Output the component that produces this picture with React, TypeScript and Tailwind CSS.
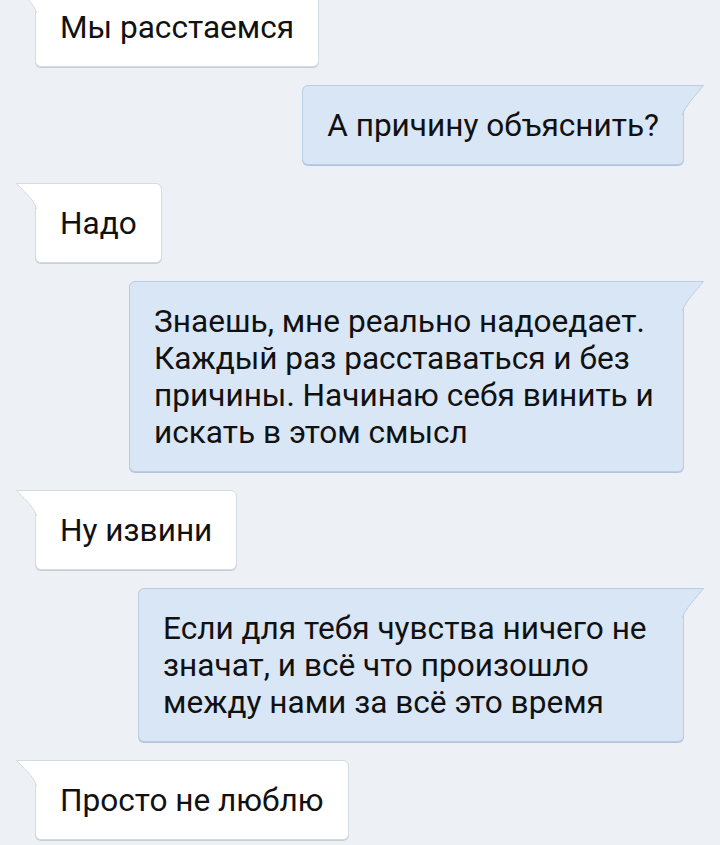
import React from 'react'

type Msg = { out: boolean; lines: string[]; width?: string }

const messages: Msg[] = [
  { out: false, lines: ['Мы расстаемся'] },
  { out: true, lines: ['А причину объяснить?'] },
  { out: false, lines: ['Надо'] },
  {
    out: true,
    width: 'w-[555px]',
    lines: [
      'Знаешь, мне реально надоедает.',
      'Каждый раз расставаться и без',
      'причины. Начинаю себя винить и',
      'искать в этом смысл',
    ],
  },
  { out: false, lines: ['Ну извини'] },
  {
    out: true,
    width: 'w-[546px]',
    lines: [
      'Если для тебя чувства ничего не',
      'значат, и всё что произошло',
      'между нами за всё это время',
    ],
  },
  { out: false, lines: ['Просто не люблю'] },
]

// little corner tail that sticks out at the top of a bubble
function Tail({ out }: { out: boolean }) {
  if (out) {
    return (
      <svg
        className="absolute top-[-1px] right-[-21px] w-[22px] h-[30px]"
        viewBox="0 0 22 30"
      >
        <path d="M0 0.5 H21.5 C15 9 2 22 0 30 V0 Z" fill="#d9e6f6" />
        <path d="M0 0.5 H21.5 C15 9 2 22 0.5 30" fill="none" stroke="#bccde3" strokeWidth="1" />
      </svg>
    )
  }
  return (
    <svg
      className="absolute top-[-1px] left-[-20px] w-[21px] h-[26px]"
      viewBox="0 0 21 26"
    >
      <path d="M21 0.5 H0.5 C6 7 18 16 21 26 V0 Z" fill="#ffffff" />
      <path d="M21 0.5 H0.5 C6 7 18 16 20.5 26" fill="none" stroke="#d5dbe3" strokeWidth="1" />
    </svg>
  )
}

function Bubble({ msg }: { msg: Msg }) {
  const base =
    'relative border py-[20.5px] px-6 text-[31.6px] leading-[37px] text-[#111111] whitespace-nowrap'
  const look = msg.out
    ? 'bg-[#d9e6f6] border-[#bccde3] rounded-b-md rounded-tl-md shadow-[0_1px_0_#b3c4da]'
    : 'bg-white border-[#d5dbe3] rounded-b-md rounded-tr-md shadow-[0_1px_0_#c6ced8]'
  return (
    <div className={`${base} ${look} ${msg.width ?? ''}`}>
      <Tail out={msg.out} />
      {msg.lines.map((l, i) => (
        <div key={i}>{l}</div>
      ))}
    </div>
  )
}

export default function App() {
  return (
    <div
      className="w-[720px] h-[845px] overflow-hidden bg-[#edf0f5]"
      style={{ fontFamily: 'Roboto, "Noto Sans", sans-serif' }}
    >
      <div className="flex flex-col gap-[18px] mt-[-13px] pl-[35px] pr-[36px]">
        {messages.map((m, i) => (
          <div key={i} className={`flex ${m.out ? 'justify-end' : 'justify-start'}`}>
            <Bubble msg={m} />
          </div>
        ))}
      </div>
    </div>
  )
}
